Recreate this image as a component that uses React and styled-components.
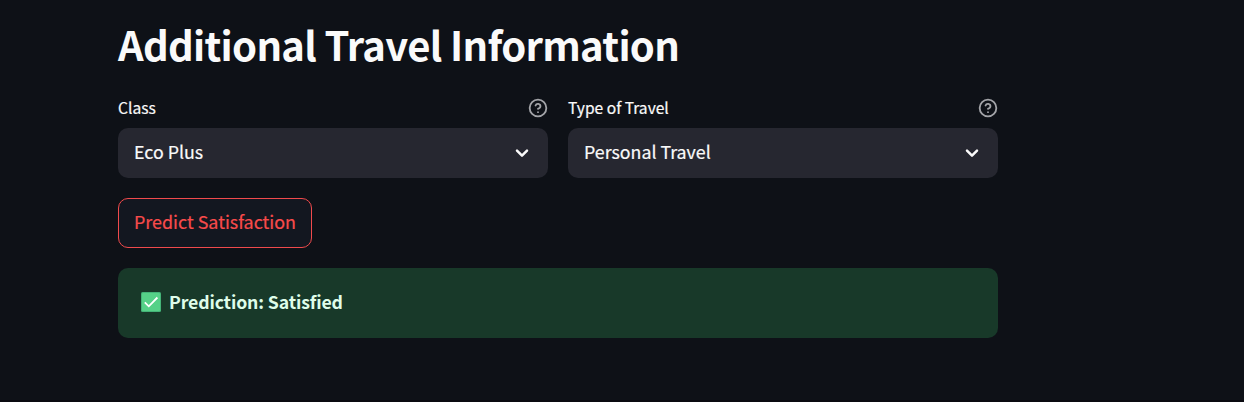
import React from "react";
import styled, { createGlobalStyle } from "styled-components";

const Global = createGlobalStyle`
  * { box-sizing: border-box; }
  body {
    margin: 0;
    background: #0e1117;
    color: #fafafa;
    font-family: "Source Sans Pro", "Noto Sans CJK SC", sans-serif;
  }
`;

const Page = styled.main`
  height: 402px;
  padding: 14px 0 0 118px;
  border-bottom: 2px solid #0a0a10;
  overflow: hidden;
`;

const Content = styled.div`
  width: 880px;
  display: flex;
  flex-direction: column;
`;

const Heading = styled.h1`
  margin: 0;
  height: 60px;
  line-height: 60px;
  font-size: 40px;
  font-weight: 700;
  letter-spacing: -0.71px;
  white-space: nowrap;
`;

const Fields = styled.div`
  display: grid;
  grid-template-columns: 1fr 1fr;
  gap: 20px;
  margin-top: 22px;
`;

const Field = styled.div`
  display: flex;
  flex-direction: column;
`;

const LabelRow = styled.div`
  display: flex;
  align-items: center;
  justify-content: space-between;
  height: 24px;
  margin-bottom: 8px;
`;

const Label = styled.span`
  padding-bottom: 2px;
  font-size: 15.6px;
  line-height: 22px;
  -webkit-text-stroke: 0.2px currentColor;
  white-space: nowrap;
`;

const Select = styled.div`
  display: flex;
  align-items: center;
  justify-content: space-between;
  height: 50px;
  padding: 0 16px;
  border-radius: 10px;
  background: #262730;
  font-size: 17.8px;
  line-height: 30px;
`;

const Value = styled.span`
  padding-bottom: 4px;
  -webkit-text-stroke: 0.2px currentColor;
`;

const Button = styled.button`
  align-self: flex-start;
  width: 194px;
  height: 50px;
  margin-top: 20px;
  padding: 0 15px 4px;
  border: 1px solid #f04a4c;
  border-radius: 10px;
  background: #131720;
  color: #f84b4b;
  font-family: inherit;
  font-size: 17.9px;
  line-height: 30px;
  -webkit-text-stroke: 0.2px currentColor;
  text-align: left;
  white-space: nowrap;
`;

const Alert = styled.div`
  display: flex;
  align-items: center;
  height: 70px;
  margin-top: 20px;
  padding: 0 23px 2px;
  gap: 8px;
  border-radius: 10px;
  background: #183929;
  color: #dffde9;
  font-size: 17.7px;
  font-weight: 700;
  line-height: 30px;
`;

const Message = styled.span`
  padding-bottom: 2px;
  letter-spacing: -0.14px;
`;

const Icon = styled.svg`
  display: block;
  flex: none;
`;

const Help = () => (
  <Icon width="20" height="20" viewBox="0 0 24 24" fill="none" stroke="#a3a4a8" strokeWidth="2.2" strokeLinecap="round" strokeLinejoin="round">
    <circle cx="12" cy="12" r="10" />
    <path d="M9.09 9a3 3 0 0 1 5.83 1c0 2-3 3-3 3" />
    <path d="M12 17h.01" />
  </Icon>
);

const Chevron = () => (
  <Icon width="20" height="20" viewBox="0 0 20 20" fill="none" stroke="#fafafa" strokeWidth="2.5" strokeLinecap="round" strokeLinejoin="round">
    <path d="M5 7.6l5 5 5-5" />
  </Icon>
);

const Check = () => (
  <Icon width="20" height="20" viewBox="0 0 20 20" fill="none">
    <rect width="20" height="20" rx="1.5" fill="#44b478" />
    <rect x="1" y="1" width="18" height="18" rx="1" fill="#56d188" />
    <path d="M3.8 10.3l4 4 8.6-8.8" stroke="#fff" strokeWidth="1.8" />
  </Icon>
);

const SelectField = ({ label, value }) => (
  <Field>
    <LabelRow>
      <Label>{label}</Label>
      <Help />
    </LabelRow>
    <Select>
      <Value>{value}</Value>
      <Chevron />
    </Select>
  </Field>
);

export default function App() {
  return (
    <>
      <Global />
      <Page>
        <Content>
          <Heading>Additional Travel Information</Heading>
          <Fields>
            <SelectField label="Class" value="Eco Plus" />
            <SelectField label="Type of Travel" value="Personal Travel" />
          </Fields>
          <Button>Predict Satisfaction</Button>
          <Alert>
            <Check />
            <Message>Prediction: Satisfied</Message>
          </Alert>
        </Content>
      </Page>
    </>
  );
}
